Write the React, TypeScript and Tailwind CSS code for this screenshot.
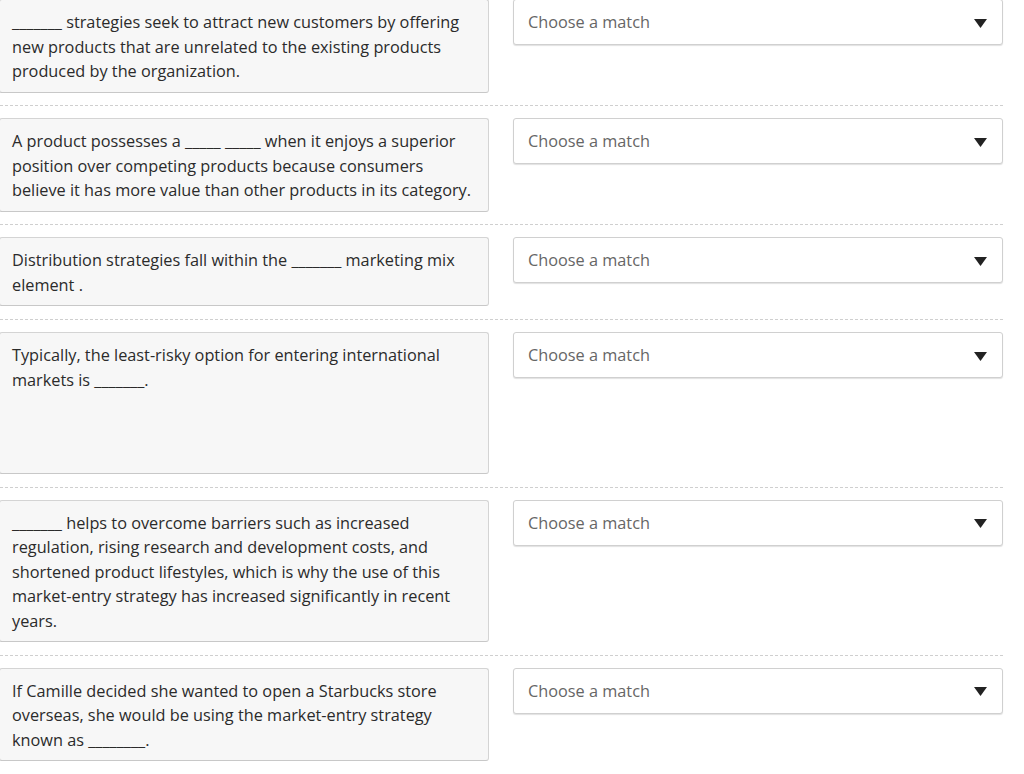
const questions: { text: string; height?: string }[] = [
  {
    text: "_______ strategies seek to attract new customers by offering new products that are unrelated to the existing products produced by the organization.",
  },
  {
    text: "A product possesses a _____ _____ when it enjoys a superior position over competing products because consumers believe it has more value than other products in its category.",
  },
  {
    text: "Distribution strategies fall within the _______ marketing mix element .",
  },
  {
    text: "Typically, the least-risky option for entering international markets is _______.",
    height: "h-[142px]",
  },
  {
    text: "_______ helps to overcome barriers such as increased regulation, rising research and development costs, and shortened product lifestyles, which is why the use of this market-entry strategy has increased significantly in recent years.",
  },
  {
    text: "If Camille decided she wanted to open a Starbucks store overseas, she would be using the market-entry strategy known as ________.",
  },
];

function MatchSelect() {
  return (
    <button
      type="button"
      className="flex h-[46px] w-[490px] shrink-0 items-center justify-between rounded-[3px] border border-[#d0d0d0] bg-white pl-[14px] pr-[15px] text-left text-[16.3px] text-[#666] shadow-[0_1px_1px_rgba(0,0,0,0.12)]"
    >
      <span>Choose a match</span>
      <svg width="13" height="9" viewBox="0 0 13 9" className="mt-[2px]">
        <path d="M0 0 H13 L6.5 9 Z" fill="#222" />
      </svg>
    </button>
  );
}

export default function App() {
  return (
    <div
      className="-ml-px -mt-px w-[1004px] bg-white text-[16.3px] text-[#2b2b2b]"
      style={{ fontFamily: '"Open Sans", "Liberation Sans", sans-serif' }}
    >
      {questions.map((q, i) => (
        <div key={i}>
          <div className="flex items-start gap-6">
            <div
              className={`w-[490px] shrink-0 rounded-[3px] border border-[#d4d4d4] border-b-[#c8c8c8] bg-[#f7f7f7] pt-[10px] pb-[8px] pl-[12px] pr-[10px] leading-[24.5px] ${q.height ?? ""}`}
            >
              {q.text}
            </div>
            <MatchSelect />
          </div>
          {i < questions.length - 1 && (
            <div className="mt-[12.7px] mb-[12px] ml-px border-t border-dashed border-[#cfcfcf]" />
          )}
        </div>
      ))}
    </div>
  );
}
